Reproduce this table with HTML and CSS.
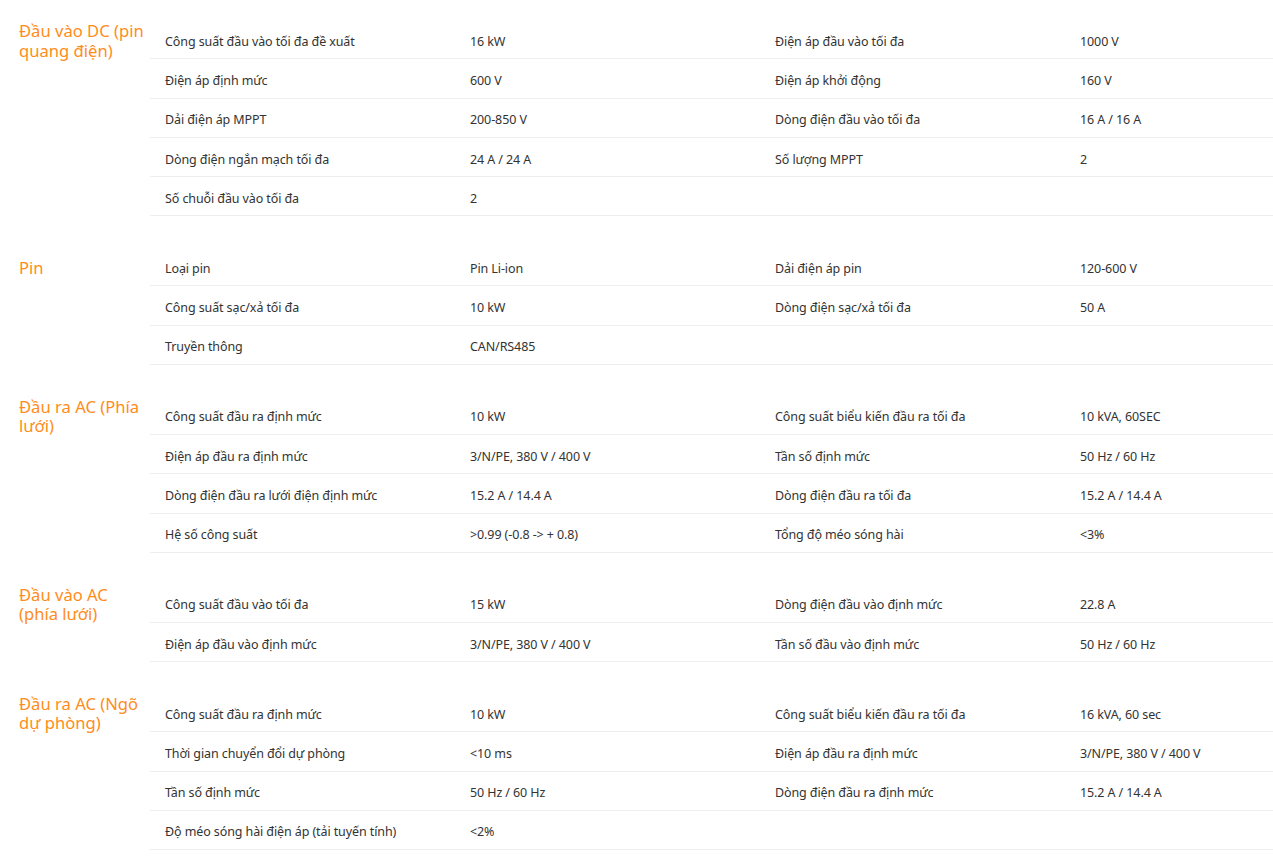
FILE: index.html
```html
<!DOCTYPE html>
<html lang="vi">
<head>
<meta charset="utf-8">
<title>Thông số kỹ thuật</title>
<link rel="stylesheet" href="styles.css">
</head>
<body>
<div class="specs">
  <section class="spec-section">
    <div class="spec-heading"><h3>Đầu vào DC (pin quang điện)</h3></div>
    <div class="spec-table">
      <div class="spec-row"><span>Công suất đầu vào tối đa đề xuất</span><span>16 kW</span><span>Điện áp đầu vào tối đa</span><span>1000 V</span></div>
      <div class="spec-row"><span>Điện áp định mức</span><span>600 V</span><span>Điện áp khởi động</span><span>160 V</span></div>
      <div class="spec-row"><span>Dải điện áp MPPT</span><span>200-850 V</span><span>Dòng điện đầu vào tối đa</span><span>16 A / 16 A</span></div>
      <div class="spec-row"><span>Dòng điện ngắn mạch tối đa</span><span>24 A / 24 A</span><span>Số lượng MPPT</span><span>2</span></div>
      <div class="spec-row"><span>Số chuỗi đầu vào tối đa</span><span>2</span><span></span><span></span></div>
    </div>
  </section>

  <section class="spec-section">
    <div class="spec-heading"><h3>Pin</h3></div>
    <div class="spec-table">
      <div class="spec-row"><span>Loại pin</span><span>Pin Li-ion</span><span>Dải điện áp pin</span><span>120-600 V</span></div>
      <div class="spec-row"><span>Công suất sạc/xả tối đa</span><span>10 kW</span><span>Dòng điện sạc/xả tối đa</span><span>50 A</span></div>
      <div class="spec-row"><span>Truyền thông</span><span>CAN/RS485</span><span></span><span></span></div>
    </div>
  </section>

  <section class="spec-section">
    <div class="spec-heading"><h3>Đầu ra AC (Phía lưới)</h3></div>
    <div class="spec-table">
      <div class="spec-row"><span>Công suất đầu ra định mức</span><span>10 kW</span><span>Công suất biểu kiến đầu ra tối đa</span><span>10 kVA, 60SEC</span></div>
      <div class="spec-row"><span>Điện áp đầu ra định mức</span><span>3/N/PE, 380 V / 400 V</span><span>Tần số định mức</span><span>50 Hz / 60 Hz</span></div>
      <div class="spec-row"><span>Dòng điện đầu ra lưới điện định mức</span><span>15.2 A / 14.4 A</span><span>Dòng điện đầu ra tối đa</span><span>15.2 A / 14.4 A</span></div>
      <div class="spec-row"><span>Hệ số công suất</span><span>&gt;0.99 (-0.8 -&gt; + 0.8)</span><span>Tổng độ méo sóng hài</span><span>&lt;3%</span></div>
    </div>
  </section>

  <section class="spec-section">
    <div class="spec-heading"><h3>Đầu vào AC (phía lưới)</h3></div>
    <div class="spec-table">
      <div class="spec-row"><span>Công suất đầu vào tối đa</span><span>15 kW</span><span>Dòng điện đầu vào định mức</span><span>22.8 A</span></div>
      <div class="spec-row"><span>Điện áp đầu vào định mức</span><span>3/N/PE, 380 V / 400 V</span><span>Tần số đầu vào định mức</span><span>50 Hz / 60 Hz</span></div>
    </div>
  </section>

  <section class="spec-section">
    <div class="spec-heading"><h3>Đầu ra AC (Ngõ dự phòng)</h3></div>
    <div class="spec-table">
      <div class="spec-row"><span>Công suất đầu ra định mức</span><span>10 kW</span><span>Công suất biểu kiến đầu ra tối đa</span><span>16 kVA, 60 sec</span></div>
      <div class="spec-row"><span>Thời gian chuyển đổi dự phòng</span><span>&lt;10 ms</span><span>Điện áp đầu ra định mức</span><span>3/N/PE, 380 V / 400 V</span></div>
      <div class="spec-row"><span>Tần số định mức</span><span>50 Hz / 60 Hz</span><span>Dòng điện đầu ra định mức</span><span>15.2 A / 14.4 A</span></div>
      <div class="spec-row"><span>Độ méo sóng hài điện áp (tải tuyến tính)</span><span>&lt;2%</span><span></span><span></span></div>
    </div>
  </section>
</div>
</body>
</html>
```

FILE: styles.css
```css
* { box-sizing: border-box; }

html, body {
  margin: 0;
  padding: 0;
  background: #ffffff;
}

body {
  font-family: "Noto Sans", "Open Sans", sans-serif;
  color: #333333;
}

.specs {
  padding-top: 20px;
  display: flex;
  flex-direction: column;
  gap: 30.7px;
}

.spec-section {
  display: flex;
  align-items: flex-start;
}

.spec-heading {
  width: 150px;
  flex: 0 0 150px;
  padding: 1px 0 0 19px;
  min-height: 39.3px;
  display: flex;
  align-items: center;
}

.spec-heading h3 {
  margin: 0;
  font-size: 16.6px;
  font-weight: 400;
  line-height: 19.5px;
  color: #ff8c1a;
}

.spec-table {
  flex: 1 1 auto;
  display: flex;
  flex-direction: column;
}

.spec-row {
  display: grid;
  grid-template-columns: 305px 305px 305px 1fr;
  align-items: center;
  height: 39.3px;
  padding-top: 4px;
  border-bottom: 1px solid #eeeeee;
  font-size: 12.5px;
  letter-spacing: -0.1px;
}

.spec-row span {
  padding-left: 15px;
  white-space: nowrap;
}
```
